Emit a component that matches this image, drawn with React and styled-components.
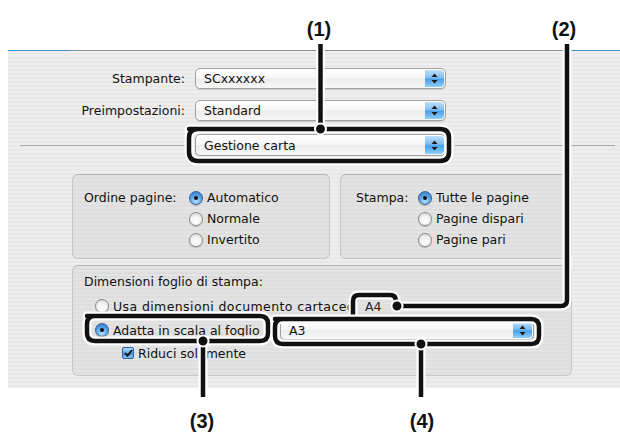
import React from 'react'
import styled, { createGlobalStyle } from 'styled-components'

const GlobalStyle = createGlobalStyle`
  body {
    margin: 0;
    background: #fff;
    font-family: "DejaVu Sans", "Liberation Sans", sans-serif;
  }
`

const Page = styled.div`
  position: relative;
  width: 620px;
  height: 432px;
  background: #fff;
  overflow: hidden;
`

const Header = styled.div`
  height: 50px;
`

const Panel = styled.div`
  position: relative;
  box-sizing: border-box;
  margin-left: 8px;
  height: 338px;
  padding-top: 17px;
  border-top: 1px solid #8f8f8f;
  background: repeating-linear-gradient(180deg, #eeeeee 0, #eeeeee 2px, #e8e8e8 2px, #e8e8e8 4px);
  font-size: 12.5px;
  color: #111;

  &::before, &::after {
    content: '';
    position: absolute;
    top: -1px;
    height: 1px;
    background: #3f8fcb;
  }
  &::before { left: 0; width: 62px; }
  &::after { right: 0; width: 50px; }
`

const FieldRow = styled.div`
  display: flex;
  align-items: center;
  height: 21px;
  margin-bottom: ${p => p.$gap || 0}px;
`

const FieldLabel = styled.div`
  width: 177px;
  text-align: right;
  margin-right: 10px;
  white-space: nowrap;
`

const PopupBox = styled.div`
  position: relative;
  box-sizing: border-box;
  display: flex;
  align-items: center;
  width: ${p => p.$w}px;
  height: ${p => p.$h || 21}px;
  padding-left: 8px;
  border: 1px solid #a0a0a0;
  border-radius: 5px;
  background: linear-gradient(180deg, #ffffff 0%, #f6f6f6 48%, #ebebeb 52%, #f8f8f8 100%);
  box-shadow: 0 1px 1px rgba(0, 0, 0, 0.12);
  white-space: nowrap;
  overflow: hidden;
`

const PopupText = styled.span`
  flex: 1;
`

const PopupButton = styled.div`
  display: flex;
  align-items: center;
  justify-content: center;
  width: 19px;
  align-self: stretch;
  margin: 1px 1px 1px 0;
  border-radius: 0 4px 4px 0;
  background: linear-gradient(180deg, #bfe0fb 0%, #7dbdf2 45%, #4aa0e8 55%, #8fd0f8 100%);
`

const Popup = ({ children, w, h }) => (
  <PopupBox $w={w} $h={h}>
    <PopupText>{children}</PopupText>
    <PopupButton>
      <svg width="7" height="11" viewBox="0 0 7 11">
        <path d="M3.5 0.5 L6.5 4 L0.5 4 Z" fill="#1a1a1a" />
        <path d="M3.5 10.5 L6.5 7 L0.5 7 Z" fill="#1a1a1a" />
      </svg>
    </PopupButton>
  </PopupBox>
)

const SeparatorRow = styled.div`
  display: flex;
  align-items: center;
  height: 22px;
  margin-top: 13px;
  padding-left: 12px;
`

const Rule = styled.div`
  width: ${p => p.$w}px;
  height: 1px;
  background: #a9a9a9;
  margin: ${p => p.$m};
`

const GroupRow = styled.div`
  display: flex;
  gap: 10px;
  margin: ${p => p.$top}px 0 0 64px;
`

const GroupBox = styled.div`
  box-sizing: border-box;
  width: ${p => p.$w}px;
  height: ${p => p.$h}px;
  padding: ${p => p.$pad};
  border: 1px solid #c6c6c6;
  border-top-color: #b4b4b4;
  border-radius: 6px;
  background: repeating-linear-gradient(180deg, #e3e3e3 0, #e3e3e3 2px, #dedede 2px, #dedede 4px);
`

const OptionGroup = styled.div`
  display: flex;
`

const GroupLabel = styled.div`
  width: ${p => p.$w}px;
  line-height: 21px;
  white-space: nowrap;
`

const OptionList = styled.div`
  display: flex;
  flex-direction: column;
`

const Option = styled.div`
  display: flex;
  align-items: center;
  height: ${p => p.$h || 21}px;
  margin-left: ${p => p.$indent || 0}px;
  white-space: nowrap;
`

const Radio = styled.span`
  position: relative;
  flex: none;
  box-sizing: border-box;
  width: 14px;
  height: 14px;
  margin-right: 4px;
  border-radius: 50%;
  border: 1px solid ${p => (p.$on ? '#3a6597' : '#8c8c8c')};
  background: ${p =>
    p.$on
      ? 'radial-gradient(circle at 50% 75%, #b7e0ff 0%, #4f9ee4 55%, #2f6fb8 100%)'
      : 'radial-gradient(circle at 50% 70%, #ffffff 0%, #f2f2f2 50%, #c9c9c9 100%)'};
  box-shadow: 0 1px 1px rgba(0, 0, 0, 0.2);

  &::after {
    content: '';
    display: ${p => (p.$on ? 'block' : 'none')};
    position: absolute;
    left: 4px;
    top: 4px;
    width: 4px;
    height: 4px;
    border-radius: 50%;
    background: #111;
  }
`

const Check = styled.span`
  display: flex;
  align-items: center;
  justify-content: center;
  flex: none;
  box-sizing: border-box;
  width: 12px;
  height: 12px;
  margin-right: 4px;
  border: 1px solid #2f5f9a;
  border-radius: 2px;
  background: linear-gradient(180deg, #b9dcfa 0%, #5aa6ea 50%, #3d8de0 55%, #8ccaf6 100%);
`

const OptionText = styled.span`
  display: inline-block;
  flex: none;
  width: ${p => (p.$w ? `${p.$w}px` : 'auto')};
  white-space: nowrap;
  letter-spacing: ${p => p.$spacing || 0}px;
`

const StaticValue = styled.span`
  margin-left: 13px;
  color: #222;
`

const BoxTitle = styled.div`
  line-height: 18px;
  margin-bottom: 3px;
`

const Overlay = styled.svg`
  position: absolute;
  left: 0;
  top: 0;
  pointer-events: none;
`

const Callout = styled.div`
  position: absolute;
  left: ${p => p.$x}px;
  top: ${p => p.$y}px;
  transform: translate(-50%, -50%);
  font-family: "Liberation Sans", Arial, sans-serif;
  font-weight: bold;
  font-size: 20px;
  line-height: 1;
  color: #111;
`

// callout leader lines and frames, in page coordinates
const paths = [
  'M320.5 44 V129',
  'M189 129 H440 Q449 129 449 138 V152 Q449 161 440 161 H198 Q189 161 189 152 V138 Q189 129 198 129 Z',
  'M567 44 V300 Q567 306 561 306 H397',
  'M353 318 V301 Q353 295 359 295 H390 Q396 295 396 301 V306',
  'M87 316 H260 Q268 316 268 324 V333 Q268 341 260 341 H95 Q87 341 87 333 V324 Q87 316 95 316 Z M203 341 V397',
  'M275 319 H531 Q539 319 539 327 V336 Q539 344 531 344 H283 Q275 344 275 336 V327 Q275 319 283 319 Z M421 344 V397',
]

const dots = [
  [320.5, 129],
  [397, 306],
  [203, 341],
  [421, 344],
]

const Annotations = () => (
  <Overlay width="620" height="432" viewBox="0 0 620 432">
    {paths.map((d, i) => (
      <g key={i}>
        <path d={d} fill="none" stroke="#fff" strokeWidth="9" strokeLinejoin="round" />
        <path d={d} fill="none" stroke="#111" strokeWidth="4.5" strokeLinejoin="round" />
      </g>
    ))}
    {dots.map(([x, y], i) => (
      <circle key={i} cx={x} cy={y} r="5.5" fill="#111" stroke="#fff" strokeWidth="2" />
    ))}
  </Overlay>
)

export default function App() {
  return (
    <Page>
      <GlobalStyle />
      <Header />
      <Panel>
        <FieldRow $gap={11}>
          <FieldLabel>Stampante:</FieldLabel>
          <Popup w={251}>SCxxxxxx</Popup>
        </FieldRow>
        <FieldRow>
          <FieldLabel>Preimpostazioni:</FieldLabel>
          <Popup w={251}>Standard</Popup>
        </FieldRow>

        <SeparatorRow>
          <Rule $w={167} $m="0 8px 0 0" />
          <Popup w={251} h={22}>Gestione carta</Popup>
          <Rule $w={160} $m="0 0 0 9px" />
        </SeparatorRow>

        <GroupRow $top={18}>
          <GroupBox $w={258} $h={85} $pad="12px 0 0 11px">
            <OptionGroup>
              <GroupLabel $w={105}>Ordine pagine:</GroupLabel>
              <OptionList>
                <Option><Radio $on />Automatico</Option>
                <Option><Radio />Normale</Option>
                <Option><Radio />Invertito</Option>
              </OptionList>
            </OptionGroup>
          </GroupBox>
          <GroupBox $w={232} $h={85} $pad="12px 0 0 15px">
            <OptionGroup>
              <GroupLabel $w={62}>Stampa:</GroupLabel>
              <OptionList>
                <Option><Radio $on />Tutte le pagine</Option>
                <Option><Radio />Pagine dispari</Option>
                <Option><Radio />Pagine pari</Option>
              </OptionList>
            </OptionGroup>
          </GroupBox>
        </GroupRow>

        <GroupRow $top={6}>
          <GroupBox $w={500} $h={111} $pad="7px 11px 0 11px">
            <BoxTitle>Dimensioni foglio di stampa:</BoxTitle>
            <Option $h={24} $indent={11}>
              <Radio />
              <OptionText $w={239} $spacing={0.4}>Usa dimensioni documento cartaceo</OptionText>
              <StaticValue>A4</StaticValue>
            </Option>
            <Option $h={24} $indent={11}>
              <Radio $on />
              <OptionText $w={167}>Adatta in scala al foglio</OptionText>
              <Popup w={254} h={20}>A3</Popup>
            </Option>
            <Option $h={22} $indent={38}>
              <Check>
                <svg width="9" height="8" viewBox="0 0 9 8">
                  <path d="M1 4 L3.5 6.8 L8 1" fill="none" stroke="#111" strokeWidth="1.8" />
                </svg>
              </Check>
              Riduci solamente
            </Option>
          </GroupBox>
        </GroupRow>
      </Panel>

      <Annotations />
      <Callout $x={319} $y={29}>(1)</Callout>
      <Callout $x={564} $y={29}>(2)</Callout>
      <Callout $x={202} $y={421}>(3)</Callout>
      <Callout $x={422} $y={421}>(4)</Callout>
    </Page>
  )
}
